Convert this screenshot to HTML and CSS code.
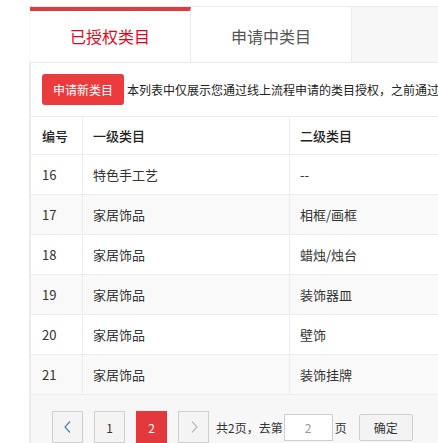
FILE: index.html
```html
<!DOCTYPE html>
<html lang="zh-CN">
<head>
<meta charset="utf-8">
<title>类目授权</title>
<link rel="stylesheet" href="styles.css">
</head>
<body>
<div class="wrap">
  <div class="tabs">
    <div class="tab active">已授权类目</div>
    <div class="tab">申请中类目</div>
  </div>
  <div class="panel">
    <div class="toolbar">
      <button class="btn-apply">申请新类目</button>
      <span class="desc">本列表中仅展示您通过线上流程申请的类目授权，之前通过线下方式申请的类目授权请联系您的招商对接人查询</span>
    </div>
    <table class="grid">
      <thead>
        <tr><th class="c1">编号</th><th class="c2">一级类目</th><th class="c3">二级类目</th></tr>
      </thead>
      <tbody>
        <tr><td>16</td><td>特色手工艺</td><td>--</td></tr>
        <tr class="alt"><td>17</td><td>家居饰品</td><td>相框/画框</td></tr>
        <tr><td>18</td><td>家居饰品</td><td>蜡烛/烛台</td></tr>
        <tr class="alt"><td>19</td><td>家居饰品</td><td>装饰器皿</td></tr>
        <tr><td>20</td><td>家居饰品</td><td>壁饰</td></tr>
        <tr class="alt"><td>21</td><td>家居饰品</td><td>装饰挂牌</td></tr>
      </tbody>
    </table>
    <div class="pager">
      <span class="pg">
        <svg width="10" height="14" viewBox="0 0 10 14"><path d="M7 1.5 L2 7 L7 12.5" fill="none" stroke="#4a7fc0" stroke-width="1.2"/></svg>
      </span>
      <span class="pg">1</span>
      <span class="pg cur">2</span>
      <span class="pg dis">
        <svg width="10" height="14" viewBox="0 0 10 14"><path d="M3 1.5 L8 7 L3 12.5" fill="none" stroke="#bbbbbb" stroke-width="1.2"/></svg>
      </span>
      <span class="total">共2页，去第</span>
      <span class="goto">2</span>
      <span class="unit">页</span>
      <button class="ok">确定</button>
    </div>
  </div>
</div>
</body>
</html>
```

FILE: styles.css
```css
html, body {
  margin: 0;
  padding: 0;
  background: #fff;
  overflow: hidden;
}
body {
  font-family: "Microsoft YaHei", "Noto Sans CJK SC", "Liberation Sans", sans-serif;
  color: #333;
}
.wrap {
  margin: 6px 0 0 29px;
  width: 800px;
}
.tabs {
  display: flex;
  height: 55px;
  background: #f7f7f7;
  border-top: 1px solid #ececec;
  border-bottom: 1px solid #e8e8e8;
  padding-left: 1px;
}
.tab {
  width: 160px;
  background: #fff;
  border-right: 1px solid #ececec;
  text-align: center;
  font-size: 16px;
  line-height: 51px;
  padding-top: 4px;
  color: #555;
}
.tab.active {
  color: #e0061b;
  border-top: 4px solid #e4393c;
  padding-top: 0;
}
.panel {
  border-left: 2px solid #ebebeb;
}
.toolbar {
  display: flex;
  align-items: center;
  padding: 11px 0 11px 11px;
  white-space: nowrap;
}
.btn-apply {
  width: 82px;
  height: 31px;
  border: 0;
  border-radius: 3px;
  background: #ec3b3d;
  color: #fff;
  font-family: inherit;
  font-size: 12px;
  padding: 0;
  flex: none;
}
.desc {
  font-size: 12px;
  color: #222;
  margin-left: 3px;
}
.grid {
  border-collapse: collapse;
  width: 100%;
  font-size: 13px;
}
.grid th, .grid td {
  text-align: left;
  border-top: 1px solid #ececec;
  border-right: 1px solid #ececec;
  padding: 0 0 0 10px;
  height: 39px;
  font-weight: normal;
  color: #333;
}
.grid th {
  height: 37px;
  font-weight: 500;
  color: #222;
}
.grid th.c1 { width: 40px; }
.grid th.c2 { width: 196px; }
.grid th:first-child, .grid td:first-child { padding-left: 11px; }
.grid tr.alt td { background: #f9f9f9; }
.grid tbody tr:last-child td { border-bottom: 1px solid #ececec; }
.pager {
  background: #f7f7f7;
  display: flex;
  align-items: center;
  padding: 16px 0 10px 21px;
  font-size: 12px;
  color: #333;
}
.pg {
  width: 29px;
  height: 30px;
  border: 1px solid #cfcfcf;
  background: #f4f4f4;
  display: flex;
  align-items: center;
  justify-content: center;
  margin-right: 11px;
  color: #333;
}
.pg.cur {
  background: #e4393c;
  border-color: #e4393c;
  color: #fff;
}
.pg.dis { margin-right: 7px; }
.total { margin-right: 1px; }
.goto {
  width: 47px;
  height: 25px;
  border: 1px solid #cfcfcf;
  background: #fff;
  color: #999;
  display: flex;
  align-items: center;
  justify-content: center;
}
.unit { margin-left: 2px; }
.ok {
  margin-left: 12px;
  width: 54px;
  height: 27px;
  border: 1px solid #cfcfcf;
  border-radius: 2px;
  background: #f3f3f3;
  font-family: inherit;
  font-size: 12px;
  color: #333;
  padding: 0;
}
```
